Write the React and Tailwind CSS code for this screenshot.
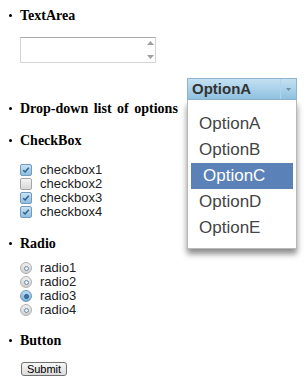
import React from "react";

const serif = { fontFamily: '"Liberation Serif", "Times New Roman", serif' };
const sans = { fontFamily: '"Liberation Sans", Arial, sans-serif' };

const Title = ({ children, className = "" }) => (
    <div className={`flex items-center h-[16px] text-[14px] font-bold text-black [word-spacing:2px] ${className}`} style={serif}>
        <span className="w-[3px] h-[3px] rounded-full bg-black ml-[9px] mr-[8px]" />
        {children}
    </div>
);

const CheckBox = ({ label, checked }) => (
    <div className="flex items-center h-[14px]">
        <span
            className={`flex items-center justify-center w-[12px] h-[12px] rounded-[2px] border ${
                checked
                    ? "border-[#6e9bbf] bg-gradient-to-b from-[#c9e3f3] to-[#8fbddc]"
                    : "border-[#a5a5a5] bg-gradient-to-b from-[#f4f4f4] to-[#d8d8d8]"
            }`}
        >
            {checked && (
                <svg width="8" height="8" viewBox="0 0 8 8">
                    <path d="M1.2 4.2 L3.1 6 L6.8 1.8" fill="none" stroke="#2d5f8a" strokeWidth="1.5" />
                </svg>
            )}
        </span>
        <span className="ml-[8px] text-[13px] text-[#222] leading-[14px]" style={sans}>
            {label}
        </span>
    </div>
);

const Radio = ({ label, checked }) => (
    <div className="flex items-center h-[14px]">
        <span
            className={`flex items-center justify-center w-[12px] h-[12px] rounded-full border ${
                checked
                    ? "border-[#6e9bbf] bg-gradient-to-b from-[#b9dbf1] to-[#78afd6]"
                    : "border-[#b0b0b0] bg-gradient-to-b from-[#f0f0f0] to-[#cfcfcf]"
            }`}
        >
            <span
                className={`w-[5px] h-[5px] rounded-full border ${
                    checked ? "border-[#2d5f8a] bg-[#3f6f98]" : "border-[#6f8fab] bg-[#e8eef3]"
                }`}
            />
        </span>
        <span className="ml-[8px] text-[13px] text-[#222] leading-[14px]" style={sans}>
            {label}
        </span>
    </div>
);

const options = ["OptionA", "OptionB", "OptionC", "OptionD", "OptionE"];

export default function App() {
    return (
        <div className="relative w-[308px] h-[382px] bg-white overflow-hidden">
            <div className="pt-[7px]">
                <Title>TextArea</Title>

                {/* zone de texte avec flèches */}
                <div className="ml-[20px] mt-[14px] flex w-[136px] h-[26px] border border-[#d4d4d4] border-t-[#a9a9a9] bg-white">
                    <div className="flex-1" />
                    <div className="flex flex-col items-center justify-between w-[10px] py-[3px]">
                        <svg width="7" height="4" viewBox="0 0 7 4">
                            <path d="M0 4 L3.5 0 L7 4 Z" fill="#a0a0a0" />
                        </svg>
                        <svg width="7" height="4" viewBox="0 0 7 4">
                            <path d="M0 0 L3.5 4 L7 0 Z" fill="#a0a0a0" />
                        </svg>
                    </div>
                </div>

                <Title className="mt-[37px]">Drop-down list of options</Title>

                <Title className="mt-[16px]">CheckBox</Title>
                <div className="ml-[20px] mt-[15px]">
                    <CheckBox label="checkbox1" checked />
                    <CheckBox label="checkbox2" />
                    <CheckBox label="checkbox3" checked />
                    <CheckBox label="checkbox4" checked />
                </div>

                <Title className="mt-[16px]">Radio</Title>
                <div className="ml-[20px] mt-[10px]">
                    <Radio label="radio1" />
                    <Radio label="radio2" />
                    <Radio label="radio3" checked />
                    <Radio label="radio4" />
                </div>

                <Title className="mt-[15px]">Button</Title>
                <button
                    className="ml-[21px] mt-[14px] h-[14px] w-[46px] flex items-center justify-center rounded-[3px] border border-[#707070] bg-gradient-to-b from-[#f6f6f6] to-[#dcdcdc] text-[11px] text-black leading-none"
                    style={sans}
                >
                    Submit
                </button>
            </div>

            {/* liste déroulante ouverte */}
            <div className="absolute left-[187px] top-[78px] w-[110px]" style={sans}>
                <div className="flex h-[22px] border border-[#8fb4cf] bg-gradient-to-b from-[#c4e0f2] to-[#8fc1e0]">
                    <div className="flex-1 flex items-center pl-[4px] text-[15px] font-bold text-[#333]">OptionA</div>
                    <div className="w-[16px] flex items-center justify-center border-l border-[#b5d3e6]">
                        <svg width="5" height="3" viewBox="0 0 5 3">
                            <path d="M0 0 L5 0 L2.5 3 Z" fill="#6a8ea8" />
                        </svg>
                    </div>
                </div>
                <div className="bg-white border border-[#b9b9b9] border-t-0 pt-[11px] pb-[7px] px-[3px] shadow-[0_5px_6px_rgba(0,0,0,0.45)]">
                    {options.map((o) => (
                        <div
                            key={o}
                            className={`h-[26px] flex items-center text-[17px] ${
                                o === "OptionC" ? "bg-[#5b82b8] text-white pl-[12px]" : "text-[#444] pl-[8px]"
                            }`}
                        >
                            {o}
                        </div>
                    ))}
                </div>
            </div>
        </div>
    );
}
